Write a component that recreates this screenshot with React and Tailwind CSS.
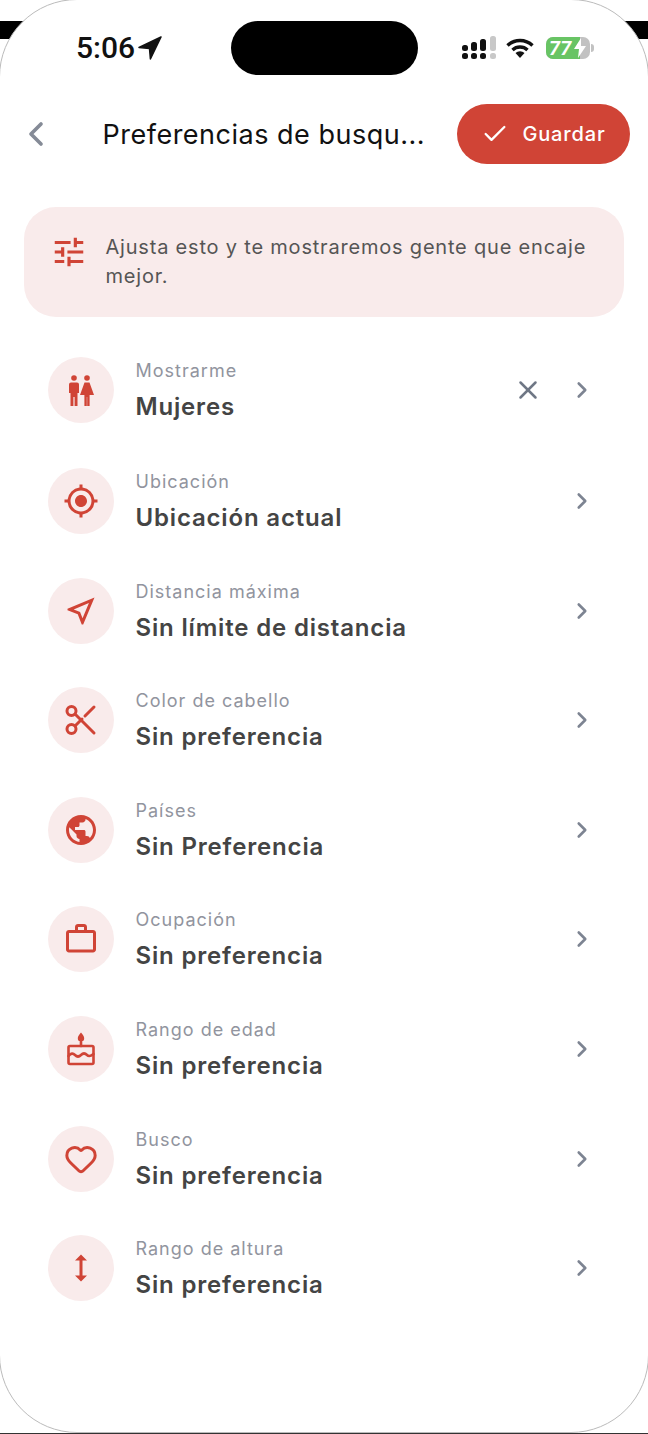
import { ChevronLeft, ChevronRight, Check, X, Heart } from "lucide-react";
import { MdTune, MdMyLocation, MdOutlineNearMe, MdPublic, MdOutlineWorkOutline, MdHeight } from "react-icons/md";

const PeopleIcon = () => (
    <svg width="26" height="31" viewBox="0 0 26 31" fill="#d04436">
        <circle cx="6" cy="3" r="2.800" />
        <path d="M1 9.500a2 2 0 0 1 2-2h6a2 2 0 0 1 2 2v8.500H9.500V31H6.600v-9H5.400v9H2.500V18H1z" />
        <circle cx="19" cy="3" r="2.800" />
        <path d="M16.500 7.500h5l4.500 12.500h-4.400V31h-2.400v-9h-.4v9h-2.400V20H12z" />
    </svg>
);

const ScissorsIcon = () => (
    <svg width="32" height="32" viewBox="0 0 32 32" fill="none" stroke="#d04436" strokeWidth="3" strokeLinecap="round">
        <circle cx="6.500" cy="7" r="4.500" />
        <circle cx="6.500" cy="25" r="4.500" />
        <path d="M10 10l19 19" />
        <path d="M10 22l7-7" />
        <path d="M20 12l9-9" />
    </svg>
);

const CakeIcon = () => (
    <svg width="30" height="34" viewBox="0 0 30 34" fill="none" stroke="#d04436" strokeWidth="2.600" strokeLinejoin="round" strokeLinecap="round">
        <path d="M15 0.500c2.200 2.800 3.200 4.300 3.200 5.700a3.200 3.200 0 0 1-6.400 0c0-1.400 1-2.900 3.200-5.700z" fill="#d04436" stroke="none" />
        <path d="M15 10v4" />
        <rect x="2.500" y="14" width="25" height="18" rx="1.500" />
        <path d="M2.500 24c2.500-3 4.500-3 6.500-1s4 2 6 0 4-2 6 0 4 1 6.500-1" />
    </svg>
);

const rows = [
    { label: "Mostrarme", value: "Mujeres", icon: <PeopleIcon />, clear: true },
    { label: "Ubicación", value: "Ubicación actual", icon: <MdMyLocation size={36} /> },
    { label: "Distancia máxima", value: "Sin límite de distancia", icon: <MdOutlineNearMe size={36} /> },
    { label: "Color de cabello", value: "Sin preferencia", icon: <ScissorsIcon /> },
    { label: "Países", value: "Sin Preferencia", icon: <MdPublic size={36} /> },
    { label: "Ocupación", value: "Sin preferencia", icon: <MdOutlineWorkOutline size={36} /> },
    { label: "Rango de edad", value: "Sin preferencia", icon: <CakeIcon /> },
    { label: "Busco", value: "Sin preferencia", icon: <Heart size={34} strokeWidth={2.1} /> },
    { label: "Rango de altura", value: "Sin preferencia", icon: <MdHeight size={36} /> },
];

const SignalIcon = () => (
    <svg width="36" height="24" viewBox="0 0 36 24">
        <rect x="1" y="17" width="6" height="6" rx="2.500" fill="#111" />
        <rect x="10" y="17" width="6" height="6" rx="2.500" fill="#111" />
        <rect x="19" y="17" width="6" height="6" rx="2.500" fill="#111" />
        <rect x="29" y="17" width="6" height="6" rx="2.500" fill="#c8c8c8" />
        <rect x="1" y="9" width="6" height="6" rx="2.500" fill="#111" />
        <rect x="10" y="6" width="6" height="9" rx="2.500" fill="#111" />
        <rect x="19" y="3" width="6" height="12" rx="2.500" fill="#111" />
        <rect x="29" y="0" width="6" height="15" rx="2.500" fill="#c8c8c8" />
    </svg>
);

const WifiIcon = () => (
    <svg width="28" height="20" viewBox="0 0 28 20" fill="none" stroke="#111" strokeWidth="3.400">
        <path d="M1.500 7.500a18 18 0 0 1 25 0" />
        <path d="M6.500 12a11 11 0 0 1 15 0" />
        <path d="M14 20l-4.500-5a6.500 6.500 0 0 1 9 0z" fill="#111" stroke="none" />
    </svg>
);

const App = () => {
    return (
        <div className="relative w-[648px] h-[1434px] overflow-hidden bg-white font-['Inter',sans-serif] border-b border-[#333]">
            <div className="absolute left-0 top-[21px] w-full h-[18px] bg-black"></div>
            <div className="relative -mx-[1px] -mt-[1px] h-[1434px] rounded-[78px] border border-[#bbb] bg-white">
                {/* status bar */}
                <div className="flex items-center h-[54px] mt-[21px] pl-[76px] pr-[54px]">
                    <span className="w-[63px] text-[30px] font-medium text-[#111] font-['Roboto',sans-serif] leading-none">5:06</span>
                    <svg width="24" height="24" viewBox="0 0 24 24" className="-ml-[1px]">
                        <path d="M23 1L1 11.500l10.500.9.900 10.600z" fill="#111" stroke="#111" strokeWidth="1.500" strokeLinejoin="round" />
                    </svg>
                    <div className="ml-[69px] w-[187px] h-[54px] rounded-full bg-black"></div>
                    <div className="ml-auto flex items-center">
                        <SignalIcon />
                        <div className="ml-[9px]"><WifiIcon /></div>
                        <div className="relative ml-[12px] flex h-[22px] w-[44px] items-center overflow-hidden rounded-[7px] bg-[#c2c2c2]">
                            <div className="h-full w-[34px] bg-[#68c464]"></div>
                            <span className="absolute left-[3px] text-[20px] font-bold leading-none text-white font-['Roboto',sans-serif] italic">77</span>
                            <svg width="14" height="20" viewBox="0 0 14 20" className="absolute right-[3px]">
                                <path d="M8 0L1 11h5l-1 9 8-12H8z" fill="#fff" />
                            </svg>
                        </div>
                        <div className="ml-[1px] h-[8px] w-[3px] rounded-r-full bg-[#c2c2c2]"></div>
                    </div>
                </div>

                {/* header */}
                <div className="flex items-center h-[60px] mt-[29px] pl-[16px] pr-[18px]">
                    <ChevronLeft size={40} strokeWidth={2.2} className="text-[#858b97]" />
                    <h1 className="ml-[46.500px] pt-[2px] text-[27px] tracking-[0.5px] font-normal text-[#111] whitespace-nowrap">Preferencias de busqu...</h1>
                    <button className="ml-auto flex items-center justify-center w-[173px] h-[60px] rounded-full bg-[#d04436] text-white text-[20px] font-medium tracking-[0.85px]">
                        <Check size={28} strokeWidth={2} className="mr-[13px]" />
                        Guardar
                    </button>
                </div>

                {/* banner */}
                <div className="flex items-center mx-[24px] mt-[43px] h-[110px] rounded-[32px] bg-[#f9ebeb] pl-[26px] pr-[24px]">
                    <MdTune size={38} className="text-[#d04436] shrink-0 self-start mt-[26px]" />
                    <p className="ml-[17.500px] text-[20px] leading-[29px] tracking-[0.8px] text-[#555]">Ajusta esto y te mostraremos gente que encaje mejor.</p>
                </div>

                {/* filas */}
                <div className="mt-[40px] pl-[48px] pr-[53px]">
                    {rows.map((row, i) => (
                        <div key={row.label} className={`flex items-center h-[66px] ${i === 0 ? "" : i === 1 ? "mt-[45px]" : "mt-[43.6px]"}`}>
                            <div className="flex h-[66px] w-[66px] shrink-0 items-center justify-center rounded-full bg-[#f9ebeb] text-[#d04436]">
                                {row.icon}
                            </div>
                            <div className="ml-[21.500px] flex flex-col">
                                <span className="text-[18px] leading-[24px] tracking-[1px] text-[#91949e]">{row.label}</span>
                                <span className="mt-[9px] text-[24px] leading-[29px] tracking-[0.83px] font-semibold text-[#444]">{row.value}</span>
                            </div>
                            {row.clear && <X size={30} strokeWidth={2} className="ml-auto mr-[26px] text-[#6f7785]" />}
                            <ChevronRight size={26} strokeWidth={2.4} className={`${row.clear ? "" : "ml-auto"} text-[#7d8492]`} />
                        </div>
                    ))}
                </div>
            </div>
        </div>
    );
};

export default App;
